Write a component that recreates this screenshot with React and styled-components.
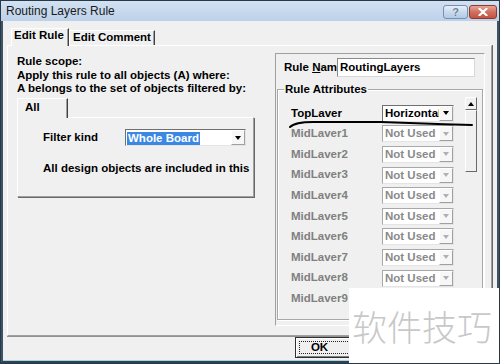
import React from 'react';
import styled, { createGlobalStyle } from 'styled-components';

const GlobalStyle = createGlobalStyle`
  html, body { margin: 0; padding: 0; background: #ffffff; }
  body { width: 500px; height: 364px; overflow: hidden; font-family: "Liberation Sans", Arial, sans-serif; }
  * { box-sizing: border-box; }
`;

const Window = styled.div`
  position: relative;
  width: 500px;
  height: 364px;
  border: 1px solid #2a3946;
  display: flex;
  flex-direction: column;
  background: #f0f0f0;
  overflow: hidden;
`;

const TitleBar = styled.div`
  height: 20px;
  flex: none;
  display: flex;
  align-items: flex-start;
  justify-content: space-between;
  background: linear-gradient(#d2e1f2, #bcd1ea);
  padding: 0 2px 0 5px;
`;

const TitleText = styled.div`
  font: 12px/20px "Liberation Sans", Arial, sans-serif;
  color: #1a1a1a;
`;

const Controls = styled.div`
  display: flex;
  gap: 1px;
  padding-top: 4px;
`;

const CaptionButton = styled.div`
  width: ${p => (p.$close ? 28 : 25)}px;
  height: 14px;
  border-radius: 3px;
  border: 1px solid ${p => (p.$close ? '#8c3b31' : '#7590b0')};
  background: ${p =>
    p.$close
      ? 'linear-gradient(#eaa595, #d0705f 50%, #c45444)'
      : 'linear-gradient(#e6eff9, #c9daee 50%, #b3c9e4)'};
  display: flex;
  align-items: center;
  justify-content: center;
  font: bold 11px/12px "Liberation Sans", Arial, sans-serif;
  color: #6c7f95;
  text-shadow: 0 0 1px #fff;
`;

const Client = styled.div`
  flex: 1;
  display: flex;
  flex-direction: column;
  border-left: 2px solid #3e5366;
  border-right: 2px solid #3e5366;
  border-bottom: 2px solid #2f4252;
  box-shadow: inset 0 -1px 0 #a6d6e6;
  padding: 7px 5px 0 4px;
`;

const TabStrip = styled.div`
  display: flex;
  align-items: flex-end;
  height: 17px;
  padding-left: 4px;
  position: relative;
  z-index: 1;
  flex: none;
`;

const Tab = styled.div`
  width: ${p => p.$w}px;
  height: ${p => (p.$active ? 18 : 15)}px;
  margin-bottom: ${p => (p.$active ? -1 : 0)}px;
  background: #f0f0f0;
  border-top: 1px solid #ffffff;
  border-left: 1px solid #ffffff;
  border-right: 1px solid #404040;
  box-shadow: inset -1px 0 0 #a0a0a0;
  padding-left: ${p => p.$pl}px;
  font: bold 11.5px/13px "Liberation Sans", Arial, sans-serif;
  color: #000;
  white-space: nowrap;
`;

const TabPanel = styled.div`
  height: 291px;
  flex: none;
  display: flex;
  align-items: flex-start;
  border-top: 1px solid #ffffff;
  border-left: 1px solid #ffffff;
  border-right: 1px solid #a0a0a0;
  border-bottom: 1px solid #a0a0a0;
  box-shadow: 1px 0 0 #696969, 0 1px 0 #909090;
`;

const LeftCol = styled.div`
  width: 237px;
  margin-left: 9px;
  padding-top: 9px;
  display: flex;
  flex-direction: column;
`;

const Text = styled.div`
  font: bold 11.5px/13.5px "Liberation Sans", Arial, sans-serif;
  color: ${p => (p.$disabled ? '#808080' : '#000')};
  white-space: nowrap;
`;

const InnerTabStrip = styled.div`
  display: flex;
  margin-top: 2.5px;
  position: relative;
  z-index: 1;
`;

const InnerTab = styled.div`
  width: 51px;
  height: 20px;
  margin-bottom: -1px;
  background: #f0f0f0;
  border-top: 1px solid #ffffff;
  border-left: 1px solid #ffffff;
  border-right: 1px solid #404040;
  box-shadow: inset -1px 0 0 #a0a0a0;
  padding: 2px 0 0 7px;
  font: bold 11.5px/13px "Liberation Sans", Arial, sans-serif;
`;

const InnerPanel = styled.div`
  height: 80px;
  border-top: 1px solid #ffffff;
  border-left: 1px solid #ffffff;
  border-right: 1px solid #a0a0a0;
  border-bottom: 1px solid #a0a0a0;
  box-shadow: 1px 1px 0 #696969;
  padding: 11px 0 0 25px;
  display: flex;
  flex-direction: column;
`;

const FilterRow = styled.div`
  display: flex;
  align-items: center;
  height: 17px;
`;

const FilterLabel = styled(Text)`
  width: 82px;
`;

const Description = styled(Text)`
  margin-top: 15.5px;
  line-height: 13px;
`;

const Combo = styled.div`
  width: ${p => p.$w}px;
  height: 17px;
  display: flex;
  background: #ffffff;
  border-top: 1px solid ${p => (p.$disabled ? '#a8a8a8' : '#707070')};
  border-left: 1px solid ${p => (p.$disabled ? '#a8a8a8' : '#707070')};
  border-right: 1px solid #e4e4e4;
  border-bottom: 1px solid #e4e4e4;
`;

const ComboValue = styled.div`
  flex: 1;
  overflow: hidden;
  white-space: nowrap;
  padding: ${p => (p.$highlight ? '1px 0 0 1px' : '0 0 0 2px')};
  font: bold 11.5px/15px "Liberation Sans", Arial, sans-serif;
  color: ${p => (p.$disabled ? '#8a8a8a' : '#000')};
`;

const Highlight = styled.span`
  display: inline-block;
  background: #3a88e4;
  color: #ffffff;
  padding: 0 1px;
  line-height: 13px;
  height: 14px;
`;

const DropButton = styled.div`
  width: 14px;
  flex: none;
  background: #f7f7f7;
  border-top: 1px solid #ffffff;
  border-left: 1px solid #ffffff;
  border-right: 1px solid #a0a0a0;
  border-bottom: 1px solid #a0a0a0;
  display: flex;
  align-items: center;
  justify-content: center;
`;

const Arrow = styled.div`
  width: 0;
  height: 0;
  border-left: 3.5px solid transparent;
  border-right: 3.5px solid transparent;
  ${p => (p.$up ? 'border-bottom' : 'border-top')}: 4px solid ${p => (p.$disabled ? '#b0b0b0' : '#000')};
`;

const RightBox = styled.div`
  width: 210px;
  height: 273px;
  margin: 7px 0 0 21px;
  border-top: 1px solid #a0a0a0;
  border-left: 1px solid #a0a0a0;
  border-right: 1px solid #ffffff;
  border-bottom: 1px solid #ffffff;
  padding: 4px 0 0 0;
  display: flex;
  flex-direction: column;
`;

const NameRow = styled.div`
  display: flex;
  align-items: center;
  height: 19px;
  padding-left: 8px;
`;

const NameLabel = styled(Text)`
  width: 53px;
  overflow: hidden;
`;

const NameInput = styled.div`
  width: 138px;
  height: 19px;
  background: #ffffff;
  border-top: 1px solid #8a8a8a;
  border-left: 1px solid #8a8a8a;
  border-right: 1px solid #d8d8d8;
  border-bottom: 1px solid #d8d8d8;
  padding-left: 2px;
  font: bold 11.5px/17px "Liberation Sans", Arial, sans-serif;
  color: #000;
`;

const Group = styled.fieldset`
  margin: 5px 1px 0 1px;
  padding: 1px 0 10px 0;
  border: 1px solid #a8a8a8;
  box-shadow: inset 1px 1px 0 #ffffff, 1px 1px 0 #ffffff;
  min-width: 0;
`;

const Legend = styled.legend`
  margin-left: 6px;
  padding: 0 1px;
  font: bold 11.5px/14px "Liberation Sans", Arial, sans-serif;
  color: #000;
`;

const GroupBody = styled.div`
  display: flex;
  align-items: flex-start;
`;

const RowsList = styled.div`
  margin-left: 13px;
  padding-top: 6px;
  display: flex;
  flex-direction: column;
`;

const Row = styled.div`
  height: 20.6px;
  display: flex;
  align-items: center;
`;

const RowLabel = styled(Text)`
  width: 91px;
`;

const Scrollbar = styled.div`
  width: 12px;
  margin-left: 11px;
  display: flex;
  flex-direction: column;
`;

const ScrollButton = styled.div`
  height: 13px;
  background: #f0f0f0;
  border-top: 1px solid #ffffff;
  border-left: 1px solid #ffffff;
  border-right: 1px solid #696969;
  border-bottom: 1px solid #696969;
  display: flex;
  align-items: center;
  justify-content: center;
`;

const ScrollThumb = styled(ScrollButton)`
  height: 62px;
`;

const Footer = styled.div`
  flex: 1;
  display: flex;
  align-items: flex-start;
  padding: 1px 0 0 288px;
`;

const Button = styled.div`
  position: relative;
  width: 75px;
  height: 21px;
  border: 1px solid #303030;
  box-shadow: inset 1px 1px 0 #ffffff, inset -1px -1px 0 #808080;
  background: #f0f0f0;
  display: flex;
  align-items: center;
  justify-content: center;
  padding-right: 26px;
  font: bold 11.5px/13px "Liberation Sans", Arial, sans-serif;
  &::after {
    content: '';
    position: absolute;
    inset: 3px;
    border: 1px dotted #202020;
  }
`;

const Annotation = styled.svg`
  position: absolute;
  left: 0;
  top: 0;
  pointer-events: none;
`;

const Watermark = styled.div`
  position: absolute;
  right: 0;
  bottom: 0;
  width: 150px;
  height: 75px;
  background: #ffffff;
  display: flex;
  align-items: center;
  padding-left: 3px;
  font: 35px/40px "Noto Sans CJK SC", sans-serif;
  font-weight: 300;
  color: #c8c8c8;
  white-space: nowrap;
`;

const layers = [
  { name: 'TopLaver', value: 'Horizontal', disabled: false },
  ...Array.from({ length: 9 }, (_, i) => ({ name: `MidLaver${i + 1}`, value: 'Not Used', disabled: true })),
];

function Select({ width, value, disabled, highlight }) {
  return (
    <Combo $w={width} $disabled={disabled}>
      <ComboValue $disabled={disabled} $highlight={highlight}>
        {highlight ? <Highlight>{value}</Highlight> : value}
      </ComboValue>
      <DropButton>
        <Arrow $disabled={disabled} />
      </DropButton>
    </Combo>
  );
}

export default function App() {
  return (
    <>
      <GlobalStyle />
      <Window>
        <TitleBar>
          <TitleText>Routing Layers Rule</TitleText>
          <Controls>
            <CaptionButton>?</CaptionButton>
            <CaptionButton $close>
              <svg width="10" height="8" viewBox="0 0 10 8">
                <path d="M1.5 0.8 L8.5 7.2 M8.5 0.8 L1.5 7.2" stroke="#ffffff" strokeWidth="2.2" strokeLinecap="round" />
              </svg>
            </CaptionButton>
          </Controls>
        </TitleBar>
        <Client>
          <TabStrip>
            <Tab $active $w={58} $pl={2}>Edit Rule</Tab>
            <Tab $w={86} $pl={3}>Edit Comment</Tab>
          </TabStrip>
          <TabPanel>
            <LeftCol>
              <Text>Rule scope:</Text>
              <Text>Apply this rule to all objects (A) where:</Text>
              <Text>A belongs to the set of objects filtered by:</Text>
              <InnerTabStrip>
                <InnerTab>All</InnerTab>
              </InnerTabStrip>
              <InnerPanel>
                <FilterRow>
                  <FilterLabel>Filter kind</FilterLabel>
                  <Select width={121} value="Whole Board" highlight />
                </FilterRow>
                <Description>All design objects are included in this</Description>
              </InnerPanel>
            </LeftCol>
            <RightBox>
              <NameRow>
                <NameLabel>
                  Rule <u>N</u>am
                </NameLabel>
                <NameInput>RoutingLayers</NameInput>
              </NameRow>
              <Group>
                <Legend>Rule Attributes</Legend>
                <GroupBody>
                  <RowsList>
                    {layers.map(l => (
                      <Row key={l.name}>
                        <RowLabel $disabled={l.disabled}>{l.name}</RowLabel>
                        <Select width={72} value={l.value} disabled={l.disabled} />
                      </Row>
                    ))}
                  </RowsList>
                  <Scrollbar>
                    <ScrollButton>
                      <Arrow $up />
                    </ScrollButton>
                    <ScrollThumb />
                  </Scrollbar>
                </GroupBody>
              </Group>
            </RightBox>
          </TabPanel>
          <Footer>
            <Button>OK</Button>
          </Footer>
        </Client>
        <Annotation width="500" height="364" viewBox="0 0 500 364">
          <path
            d="M289 126 C 293 122, 300 121, 312 121 L 380 121 C 405 122, 440 123, 471 124"
            fill="none"
            stroke="#000"
            strokeWidth="2"
            strokeLinecap="round"
          />
        </Annotation>
        <Watermark>软件技巧</Watermark>
      </Window>
    </>
  );
}
